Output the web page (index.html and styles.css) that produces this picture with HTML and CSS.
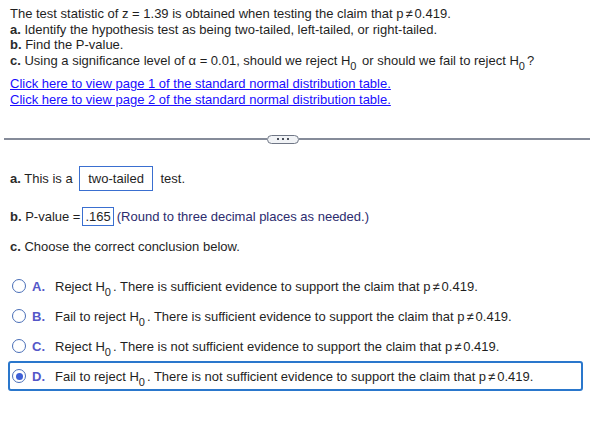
FILE: index.html
```
<!DOCTYPE html>
<html>
<head>
<meta charset="utf-8">
<link rel="stylesheet" href="styles.css">
</head>
<body>
<div class="page">
  <div class="question">
    <div class="line">The test statistic of z = 1.39 is obtained when testing the claim that p<span class="ne">≠</span>0.419.</div>
    <div class="line"><b>a.</b> Identify the hypothesis test as being two-tailed, left-tailed, or right-tailed.</div>
    <div class="line"><b>b.</b> Find the P-value.</div>
    <div class="line"><b>c.</b> Using a significance level of <span class="alpha">α</span> = 0.01, should we reject H<sub>0</sub> or should we fail to reject H<sub>0</sub>?</div>
    <div class="links">
      <a href="#" class="link">Click here to view page 1 of the standard normal distribution table.</a>
      <a href="#" class="link">Click here to view page 2 of the standard normal distribution table.</a>
    </div>
  </div>
  <div class="divider">
    <div class="rule rule-left"></div>
    <div class="pill"><span></span><span></span><span></span></div>
    <div class="rule"></div>
  </div>
  <div class="answers">
    <div class="ans ans-a"><b>a.</b> This is a <span class="box box-a">two-tailed</span> test.</div>
    <div class="ans ans-b"><b>b.</b> P-value =<span class="box box-b">.165</span> <span class="note">(Round to three decimal places as needed.)</span></div>
    <div class="ans ans-c"><b>c.</b> Choose the correct conclusion below.</div>
    <div class="options">
      <div class="opt"><span class="radio"></span><span class="letter">A.</span><span class="otext">Reject H<sub>0</sub>. There is sufficient evidence to support the claim that p<span class="ne">≠</span>0.419.</span></div>
      <div class="opt"><span class="radio"></span><span class="letter">B.</span><span class="otext">Fail to reject H<sub>0</sub>. There is sufficient evidence to support the claim that p<span class="ne">≠</span>0.419.</span></div>
      <div class="opt"><span class="radio"></span><span class="letter">C.</span><span class="otext">Reject H<sub>0</sub>. There is not sufficient evidence to support the claim that p<span class="ne">≠</span>0.419.</span></div>
      <div class="opt selected"><span class="radio on"></span><span class="letter">D.</span><span class="otext">Fail to reject H<sub>0</sub>. There is not sufficient evidence to support the claim that p<span class="ne">≠</span>0.419.</span></div>
    </div>
  </div>
</div>
</body>
</html>
```
FILE: styles.css
```
html, body {
  margin: 0;
  padding: 0;
  background: #ffffff;
}
body {
  font-family: "Liberation Sans", Arial, sans-serif;
  font-size: 13px;
  color: #1f1f1f;
}
.page {
  padding: 6px 0 0 10px;
}
.line {
  line-height: 15.5px;
}
b {
  font-weight: bold;
  color: #2b2b2b;
}
sub {
  font-size: 11px;
  vertical-align: -5px;
  line-height: 0;
  margin-right: 2px;
}
.ne {
  margin: 0 2px;
}
.links {
  margin-top: 8px;
  display: flex;
  flex-direction: column;
}
.link {
  color: #1a0dff;
  text-decoration: underline;
  line-height: 16px;
}
.divider {
  display: flex;
  align-items: center;
  margin: 25px 9px 0 -6px;
  height: 12px;
}
.rule {
  flex: 1;
  height: 2px;
  background: #858b99;
}
.rule.rule-left {
  flex: 0 0 263px;
}
.pill {
  width: 30px;
  height: 7px;
  border: 1px solid #6f7685;
  border-radius: 5px;
  background: #f1f3f6;
  display: flex;
  align-items: center;
  justify-content: center;
  gap: 3px;
}
.pill span {
  width: 2px;
  height: 2px;
  background: #4a4f5a;
}
.answers {
  margin-top: 21px;
}
.ans {
  display: flex;
  align-items: center;
  white-space: pre;
}
.box {
  border: 1px solid #3a6fd0;
  display: inline-block;
}
.box-a {
  padding: 4px 8px;
  margin: 0 4px 0 3px;
}
.box-b {
  padding: 1px 2px;
  margin: 0 3px 0 2px;
}
.ans-b {
  margin-top: 16px;
}
.note {
  color: #2c2c6e;
}
.ans-c {
  margin-top: 13px;
}
.options {
  margin-top: 17px;
  margin-right: 16px;
  display: flex;
  flex-direction: column;
}
.opt {
  display: flex;
  align-items: center;
  height: 26px;
  padding-left: 2px;
  border: 2px solid transparent;
  border-radius: 3px;
  margin-left: -2px;
}
.opt.selected {
  border-color: #2a77cc;
}
.radio {
  width: 12px;
  height: 12px;
  border: 1px solid #4a6fb8;
  border-radius: 50%;
  margin-right: 6px;
  display: flex;
  align-items: center;
  justify-content: center;
}
.radio.on::after {
  content: "";
  width: 7px;
  height: 7px;
  border-radius: 50%;
  background: #3d5fd6;
}
.letter {
  font-weight: bold;
  color: #5457c8;
  width: 23px;
}
.otext {
  color: #1f1f1f;
}
```
